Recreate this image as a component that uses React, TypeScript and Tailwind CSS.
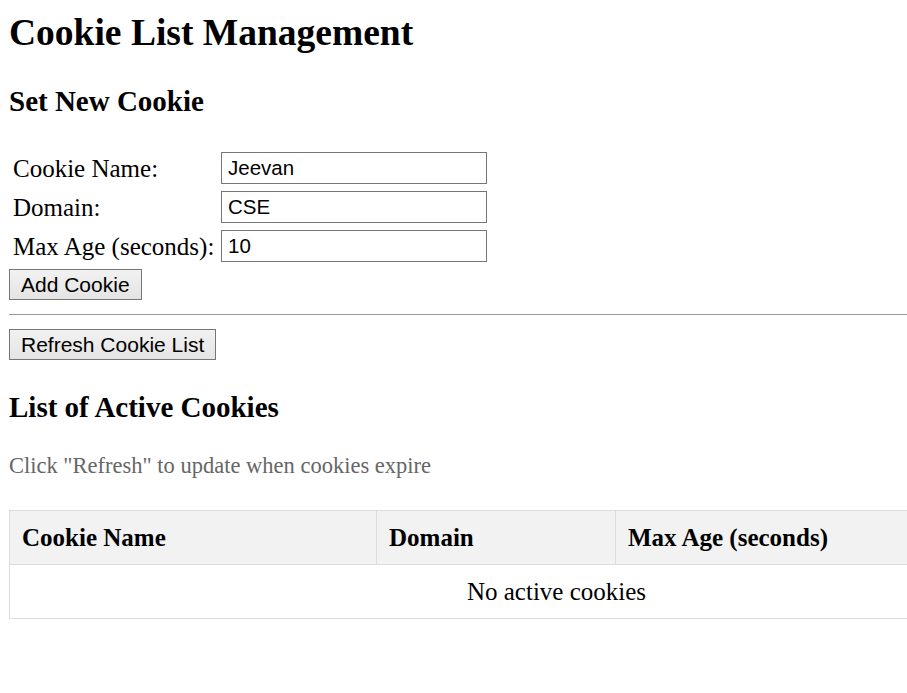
import React from "react";

const serif = { fontFamily: '"Liberation Serif", "Times New Roman", serif' };
const sans = { fontFamily: '"Liberation Sans", Arial, sans-serif' };

function Field({ label, value }: { label: string; value: string }) {
  return (
    <>
      <div className="flex items-center pt-[2px] text-[25px] leading-none text-black whitespace-nowrap">{label}</div>
      <div className="flex items-center">
        <input
          defaultValue={value}
          style={sans}
          className="w-[266px] h-[32px] border border-[#767676] bg-white px-[6px] text-[20.5px] text-black outline-none"
        />
      </div>
    </>
  );
}

export default function App() {
  return (
    <div className="w-full min-h-screen overflow-hidden bg-white" style={serif}>
      <div className="w-[1120px] pl-[9px] flex flex-col items-start">
        <h1 className="mt-[14px] text-[37.5px] leading-none font-bold text-black">Cookie List Management</h1>
        <h2 className="mt-[35px] text-[29px] leading-none font-bold text-black">Set New Cookie</h2>

        <div className="mt-[36px] ml-[4px] grid grid-cols-[208px_auto] gap-y-[7px]">
          <Field label="Cookie Name:" value="Jeevan" />
          <Field label="Domain:" value="CSE" />
          <Field label="Max Age (seconds):" value="10" />
        </div>

        <button
          style={sans}
          className="mt-[7px] h-[31px] px-[11px] border border-[#767676] bg-gradient-to-b from-[#f2f2f2] to-[#e4e4e4] text-[21px] leading-none text-black"
        >
          Add Cookie
        </button>

        <div className="mt-[14px] h-px w-full bg-[#9a9a9a]" />

        <button
          style={sans}
          className="mt-[14px] h-[31px] px-[11px] border border-[#767676] bg-gradient-to-b from-[#f2f2f2] to-[#e4e4e4] text-[21px] leading-none text-black"
        >
          Refresh Cookie List
        </button>

        <h2 className="mt-[33px] text-[29px] leading-none font-bold text-black">List of Active Cookies</h2>
        <p className="mt-[33px] text-[22.5px] leading-none text-[#666666]">Click "Refresh" to update when cookies expire</p>

        <table className="mt-[33px] w-[1095px] border-collapse text-[25px] text-black">
          <thead>
            <tr className="bg-[#f2f2f2]">
              <th className="w-[367px] h-[54px] border border-[#dddddd] px-[12px] text-left font-bold">Cookie Name</th>
              <th className="w-[239px] h-[54px] border border-[#dddddd] px-[12px] text-left font-bold">Domain</th>
              <th className="h-[54px] border border-[#dddddd] px-[12px] text-left font-bold">Max Age (seconds)</th>
            </tr>
          </thead>
          <tbody>
            <tr>
              <td colSpan={3} className="h-[54px] border border-[#dddddd] px-[12px] text-center">
                No active cookies
              </td>
            </tr>
          </tbody>
        </table>
      </div>
    </div>
  );
}
